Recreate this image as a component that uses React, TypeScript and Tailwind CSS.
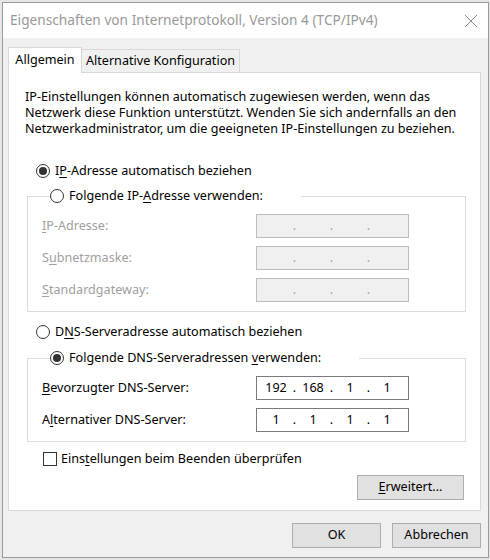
import { Fragment } from "react";
import clsx from "clsx";

function Radio({ checked }: { checked?: boolean }) {
  return (
    <span className="flex h-[14px] w-[14px] shrink-0 items-center justify-center rounded-full border border-[#333] bg-white">
      {checked && <span className="h-[8px] w-[8px] rounded-full bg-[#333]" />}
    </span>
  );
}

function IpBox({ parts, disabled }: { parts: string[]; disabled?: boolean }) {
  return (
    <div
      className={clsx(
        "flex h-[24px] w-[153px] items-center border pl-[3px]",
        disabled ? "border-[#bcbcbc] bg-[#f0f0f0] text-[#a0a0a0]" : "border-[#7a7a7a] bg-white text-black"
      )}
    >
      {parts.map((p, i) => (
        <Fragment key={i}>
          {i > 0 && <span className="w-[5px] text-center">.</span>}
          <span className="w-[32px] text-center">{p}</span>
        </Fragment>
      ))}
    </div>
  );
}

function Row({ label, parts, disabled }: { label: React.ReactNode; parts: string[]; disabled?: boolean }) {
  return (
    <div className="flex h-[24px] items-center">
      <span className={clsx("w-[214px]", disabled ? "text-[#a0a0a0]" : "text-black")}>{label}</span>
      <IpBox parts={parts} disabled={disabled} />
    </div>
  );
}

function Btn({ children, w }: { children: React.ReactNode; w: string }) {
  return (
    <button className={clsx("flex h-[25px] items-center justify-center border border-[#adadad] bg-[#e1e1e1] text-black", w)}>
      {children}
    </button>
  );
}

export default function App() {
  const empty = ["", "", "", ""];
  return (
    <div className="h-[560px] w-[490px] bg-[#e6e6e6] pl-[2px] pt-[2px] font-['Noto_Sans',sans-serif] text-[12.6px] text-black">
      <div className="flex h-[556px] w-[487px] flex-col border border-[#9a9a9a] bg-[#f0f0f0]">
        {/* title bar */}
        <div className="flex h-[35px] shrink-0 items-center justify-between bg-white pl-[7px] pr-[10px]">
          <span className="text-[13.7px] text-[#999]">Eigenschaften von Internetprotokoll, Version 4 (TCP/IPv4)</span>
          <svg width="14" height="14" viewBox="0 0 14 14" fill="none" stroke="#8a8a8a" strokeWidth="1">
            <path d="M1 1 L13 13 M13 1 L1 13" />
          </svg>
        </div>

        <div className="flex flex-1 flex-col pl-[5px] pr-[7px] pt-[9px]">
          {/* tabs */}
          <div className="flex h-[26px] items-end">
            <div className="relative z-10 flex h-[26px] w-[74px] items-center justify-center border-x border-t border-[#d9d9d9] bg-white">
              Allgemein
            </div>
            <div className="flex h-[24px] w-[158px] items-center justify-center border-r border-t border-[#d9d9d9] bg-[#f0f0f0] pb-[1px]">
              Alternative Konfiguration
            </div>
          </div>

          {/* panel */}
          <div className="-mt-px flex h-[439px] flex-col border border-[#d9d9d9] bg-white">
            <p className="ml-[16px] mt-[16px] leading-[16px]">
              IP-Einstellungen können automatisch zugewiesen werden, wenn das
              <br />
              Netzwerk diese Funktion unterstützt. Wenden Sie sich andernfalls an den
              <br />
              Netzwerkadministrator, um die geeigneten IP-Einstellungen zu beziehen.
            </p>

            <div className="ml-[27px] mt-[24px] flex h-[20px] items-center gap-[5px]">
              <Radio checked />
              <span>
                I<u className="underline-offset-2">P</u>-Adresse automatisch beziehen
              </span>
            </div>

            <fieldset className="ml-[18px] mr-[14px] mt-[5px] border border-[#dcdcdc] pb-[9px] pl-[14px] pt-[8px]">
              <legend className="ml-[8px] flex h-[20px] w-[251px] items-center gap-[5px]">
                <Radio />
                <span>
                  Folgende IP-<u className="underline-offset-2">A</u>dresse verwenden:
                </span>
              </legend>
              <div className="flex flex-col gap-[8px]">
                <Row disabled parts={empty} label={<><u className="underline-offset-2">I</u>P-Adresse:</>} />
                <Row disabled parts={empty} label={<>S<u className="underline-offset-2">u</u>bnetzmaske:</>} />
                <Row disabled parts={empty} label={<><u className="underline-offset-2">S</u>tandardgateway:</>} />
              </div>
            </fieldset>

            <div className="ml-[27px] mt-[10px] flex h-[20px] items-center gap-[5px]">
              <Radio />
              <span>
                D<u className="underline-offset-2">N</u>S-Serveradresse automatisch beziehen
              </span>
            </div>

            <fieldset className="ml-[18px] mr-[14px] mt-[6px] border border-[#dcdcdc] pb-[9px] pl-[14px] pt-[8px]">
              <legend className="ml-[8px] flex h-[20px] w-[309px] items-center gap-[5px]">
                <Radio checked />
                <span>
                  Folgende DNS-Serveradressen <u className="underline-offset-2">v</u>erwenden:
                </span>
              </legend>
              <div className="flex flex-col gap-[8px]">
                <Row parts={["192", "168", "1", "1"]} label={<><u className="underline-offset-2">B</u>evorzugter DNS-Server:</>} />
                <Row parts={["1", "1", "1", "1"]} label={<>A<u className="underline-offset-2">l</u>ternativer DNS-Server:</>} />
              </div>
            </fieldset>

            <div className="ml-[34px] mt-[7px] flex h-[20px] items-center gap-[4px]">
              <span className="h-[14px] w-[14px] shrink-0 border border-[#333] bg-white" />
              <span>
                Eins<u className="underline-offset-2">t</u>ellungen beim Beenden überprüfen
              </span>
            </div>

            <div className="mr-[16px] mt-[6px] flex justify-end">
              <Btn w="w-[107px]">
                <span>
                  <u className="underline-offset-2">E</u>rweitert...
                </span>
              </Btn>
            </div>
          </div>

          {/* dialog buttons */}
          <div className="mt-[12px] flex justify-end gap-[11px]">
            <Btn w="w-[89px]">OK</Btn>
            <Btn w="w-[89px]">Abbrechen</Btn>
          </div>
        </div>
      </div>
    </div>
  );
}
